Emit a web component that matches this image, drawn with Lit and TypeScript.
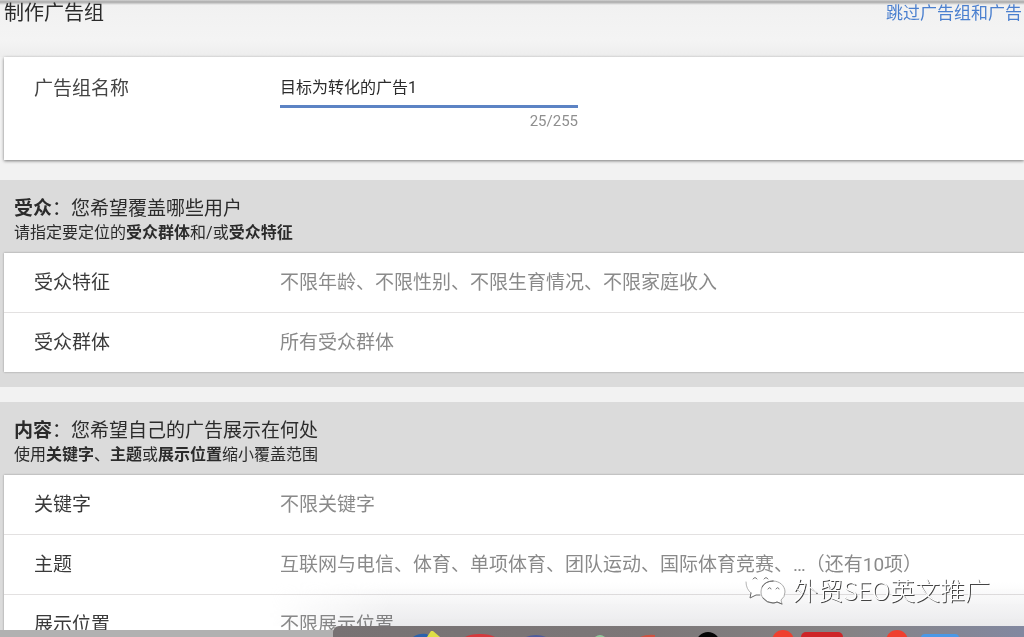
import { LitElement, html, css } from "lit";
import { customElement, property, state } from "lit/decorators.js";

interface Row {
  label: string;
  value: string;
}

const audienceRows: Row[] = [
  { label: "受众特征", value: "不限年龄、不限性别、不限生育情况、不限家庭收入" },
  { label: "受众群体", value: "所有受众群体" },
];

const contentRows: Row[] = [
  { label: "关键字", value: "不限关键字" },
  { label: "主题", value: "互联网与电信、体育、单项体育、团队运动、国际体育竞赛、…（还有10项）" },
  { label: "展示位置", value: "不限展示位置" },
];

@customElement("targeting-section")
class TargetingSection extends LitElement {
  @property({ attribute: false }) rows: Row[] = [];

  static styles = css`
    :host {
      display: block;
      background: #dbdbdb;
      padding: 16px 0 15px 4px;
    }
    .head {
      padding: 0 10px 8px;
      color: #2b2b2b;
    }
    .title {
      margin: 0;
      font-size: 19px;
      line-height: 25px;
      font-weight: 400;
    }
    .hint {
      margin: 0;
      font-size: 16px;
      line-height: 24px;
    }
    .card {
      margin: 0;
      background: #fff;
      box-shadow: 0 0 2px rgba(0, 0, 0, 0.35);
    }
    .row {
      display: grid;
      grid-template-columns: 246px 1fr;
      padding: 16px 0 16px 30px;
      font-size: 19px;
      line-height: 27px;
    }
    .row + .row {
      border-top: 1px solid #e3e1e1;
    }
    dt {
      color: #3a3a3a;
    }
    dd {
      margin: 0;
      color: #8a8a8a;
      white-space: nowrap;
    }
  `;

  render() {
    return html`
      <div class="head">
        <h2 class="title"><slot name="title"></slot></h2>
        <p class="hint"><slot name="hint"></slot></p>
      </div>
      <dl class="card">
        ${this.rows.map((r) => html`<div class="row"><dt>${r.label}</dt><dd>${r.value}</dd></div>`)}
      </dl>
    `;
  }
}

@customElement("app-root")
class AppRoot extends LitElement {
  @state() private name = "目标为转化的广告1";

  static styles = css`
    :host {
      display: block;
      position: relative;
      height: 100vh;
      overflow: hidden;
      background: #f2f2f2;
      font-family: Roboto, "Noto Sans CJK SC", sans-serif;
    }
    .top {
      height: 57px;
      box-sizing: border-box;
      display: flex;
      justify-content: space-between;
      align-items: flex-start;
      padding-left: 4px;
      background: linear-gradient(#d2d2d2 0, #a9a9a9 2px, #f1f1f1 5px, #f4f4f4 40px, #ededed);
      white-space: nowrap;
    }
    h1 {
      margin: 0;
      font-size: 20px;
      line-height: 26px;
      font-weight: 400;
      color: #2b2b2b;
    }
    .skip {
      font-size: 17px;
      line-height: 26px;
      padding-right: 2px;
      color: #4a7fcf;
      text-decoration: none;
    }
    .name-card {
      display: grid;
      grid-template-columns: 246px 298px;
      box-sizing: border-box;
      margin: 0 0 20px 4px;
      padding: 18px 0 26px 30px;
      background: #fff;
      box-shadow: 0 1px 3px rgba(0, 0, 0, 0.5);
    }
    label {
      font-size: 19px;
      line-height: 28px;
      color: #444;
    }
    .field {
      display: flex;
      flex-direction: column;
    }
    input {
      height: 33px;
      box-sizing: border-box;
      border: 0;
      border-bottom: 3px solid #5c83c4;
      padding: 0 0 8px;
      background: none;
      outline: none;
      border-radius: 0;
      font: 16px/22px Roboto, "Noto Sans CJK SC", sans-serif;
      color: #2b2b2b;
    }
    .count {
      align-self: flex-end;
      font-size: 15px;
      line-height: 26px;
      color: #8f8f8f;
    }
    .second {
      margin-top: 15px;
    }
    .shade {
      position: absolute;
      left: 270px;
      right: 0;
      bottom: 11px;
      height: 44px;
      mix-blend-mode: multiply;
      background: linear-gradient(rgba(225, 225, 228, 0), rgba(225, 225, 228, 0.7));
      -webkit-mask-image: linear-gradient(90deg, transparent, #000 120px);
      mask-image: linear-gradient(90deg, transparent, #000 120px);
    }
    .strip {
      position: absolute;
      left: 0;
      right: 0;
      bottom: 0;
      height: 7px;
      background: #b1b1b1;
    }
    .dock {
      position: absolute;
      left: 333px;
      right: 0;
      bottom: 0;
      height: 11px;
      overflow: hidden;
      border-radius: 6px 0 0 0;
      background: linear-gradient(90deg, #777273, #7c7778 45%, #858385 75%, #8288a0);
    }
    .dock svg {
      display: block;
    }
    .mark {
      position: absolute;
      right: 34px;
      bottom: 30px;
      display: flex;
      align-items: center;
      gap: 6px;
      font-family: "Noto Sans CJK SC", sans-serif;
      font-weight: 300;
      font-size: 25px;
      line-height: 36px;
      color: #fff;
      text-shadow: 1px 1px 0 #444;
      white-space: nowrap;
    }
  `;

  private onInput(e: Event) {
    this.name = (e.target as HTMLInputElement).value;
  }

  render() {
    return html`
      <header class="top">
        <h1>制作广告组</h1>
        <a class="skip" href="#">跳过广告组和广告</a>
      </header>
      <div class="name-card">
        <label for="name">广告组名称</label>
        <div class="field">
          <input id="name" type="text" .value=${this.name} @input=${this.onInput} />
          <span class="count">25/255</span>
        </div>
      </div>
      <targeting-section .rows=${audienceRows}>
        <span slot="title"><b>受众</b>：您希望覆盖哪些用户</span>
        <span slot="hint">请指定要定位的<b>受众群体</b>和/或<b>受众特征</b></span>
      </targeting-section>
      <targeting-section class="second" .rows=${contentRows}>
        <span slot="title"><b>内容</b>：您希望自己的广告展示在何处</span>
        <span slot="hint">使用<b>关键字</b>、<b>主题</b>或<b>展示位置</b>缩小覆盖范围</span>
      </targeting-section>
      <div class="shade"></div>
      <div class="strip"></div>
      <div class="dock">
        <svg width="691" height="11" viewBox="0 0 691 11" aria-hidden="true">
          <path d="M80 11Q86 7 94 8L96 11Z" fill="#2a62ad" />
          <path d="M94 11L98 5H100L107 11Z" fill="#dede45" />
          <path d="M132 11Q137 8 147 8T162 11Z" fill="#d6383c" />
          <path d="M193 11Q203 7 213 11Z" fill="#4d5c9c" />
          <path d="M262 11Q267 7 272 11Z" fill="#8fc79b" />
          <path d="M307 11Q314 8 322 9V11Z" fill="#cf5140" />
          <circle cx="375" cy="18" r="12" fill="#050505" />
          <circle cx="450" cy="15" r="11" fill="#ef402f" />
          <rect x="468" y="6" width="42" height="12" rx="5" fill="#ce2528" />
          <circle cx="564" cy="15" r="11" fill="#ef402f" />
          <rect x="588" y="8" width="38" height="12" rx="4" fill="#4a98e6" />
        </svg>
      </div>
      <div class="mark">
        <svg width="42" height="34" viewBox="0 0 42 34" fill="#fff" stroke-linejoin="round" stroke-linecap="round" aria-hidden="true">
          <path d="M17 23Q13 24 11 23L5 26L6 21Q1 17 1 12C1 6 8 1 16 1S30 5 31 11" />
          <path d="M1 10Q1 17 6 21" fill="none" stroke="#b5b5b5" />
          <path d="M6 21L5 26L11 23H15" fill="none" stroke="#666" />
          <path d="M28 9C35 9 40 14 40 20Q40 25 36 28L37 32L32 30Q30 31 28 31C21 31 16 26 16 20S21 9 28 9Z" stroke="#aaa" />
          <path d="M17 15Q20 9 28 9M18 26Q22 31 28 31Q30 31 32 30L37 32" fill="none" stroke="#666" />
          <path d="M8 7Q10 4 12 7M19 7Q21 4 23 7M23 17Q25 14 26 17M31 17Q33 14 34 17" fill="none" stroke="#777" />
        </svg>
        <span>外贸SEO英文推广</span>
      </div>
    `;
  }
}
